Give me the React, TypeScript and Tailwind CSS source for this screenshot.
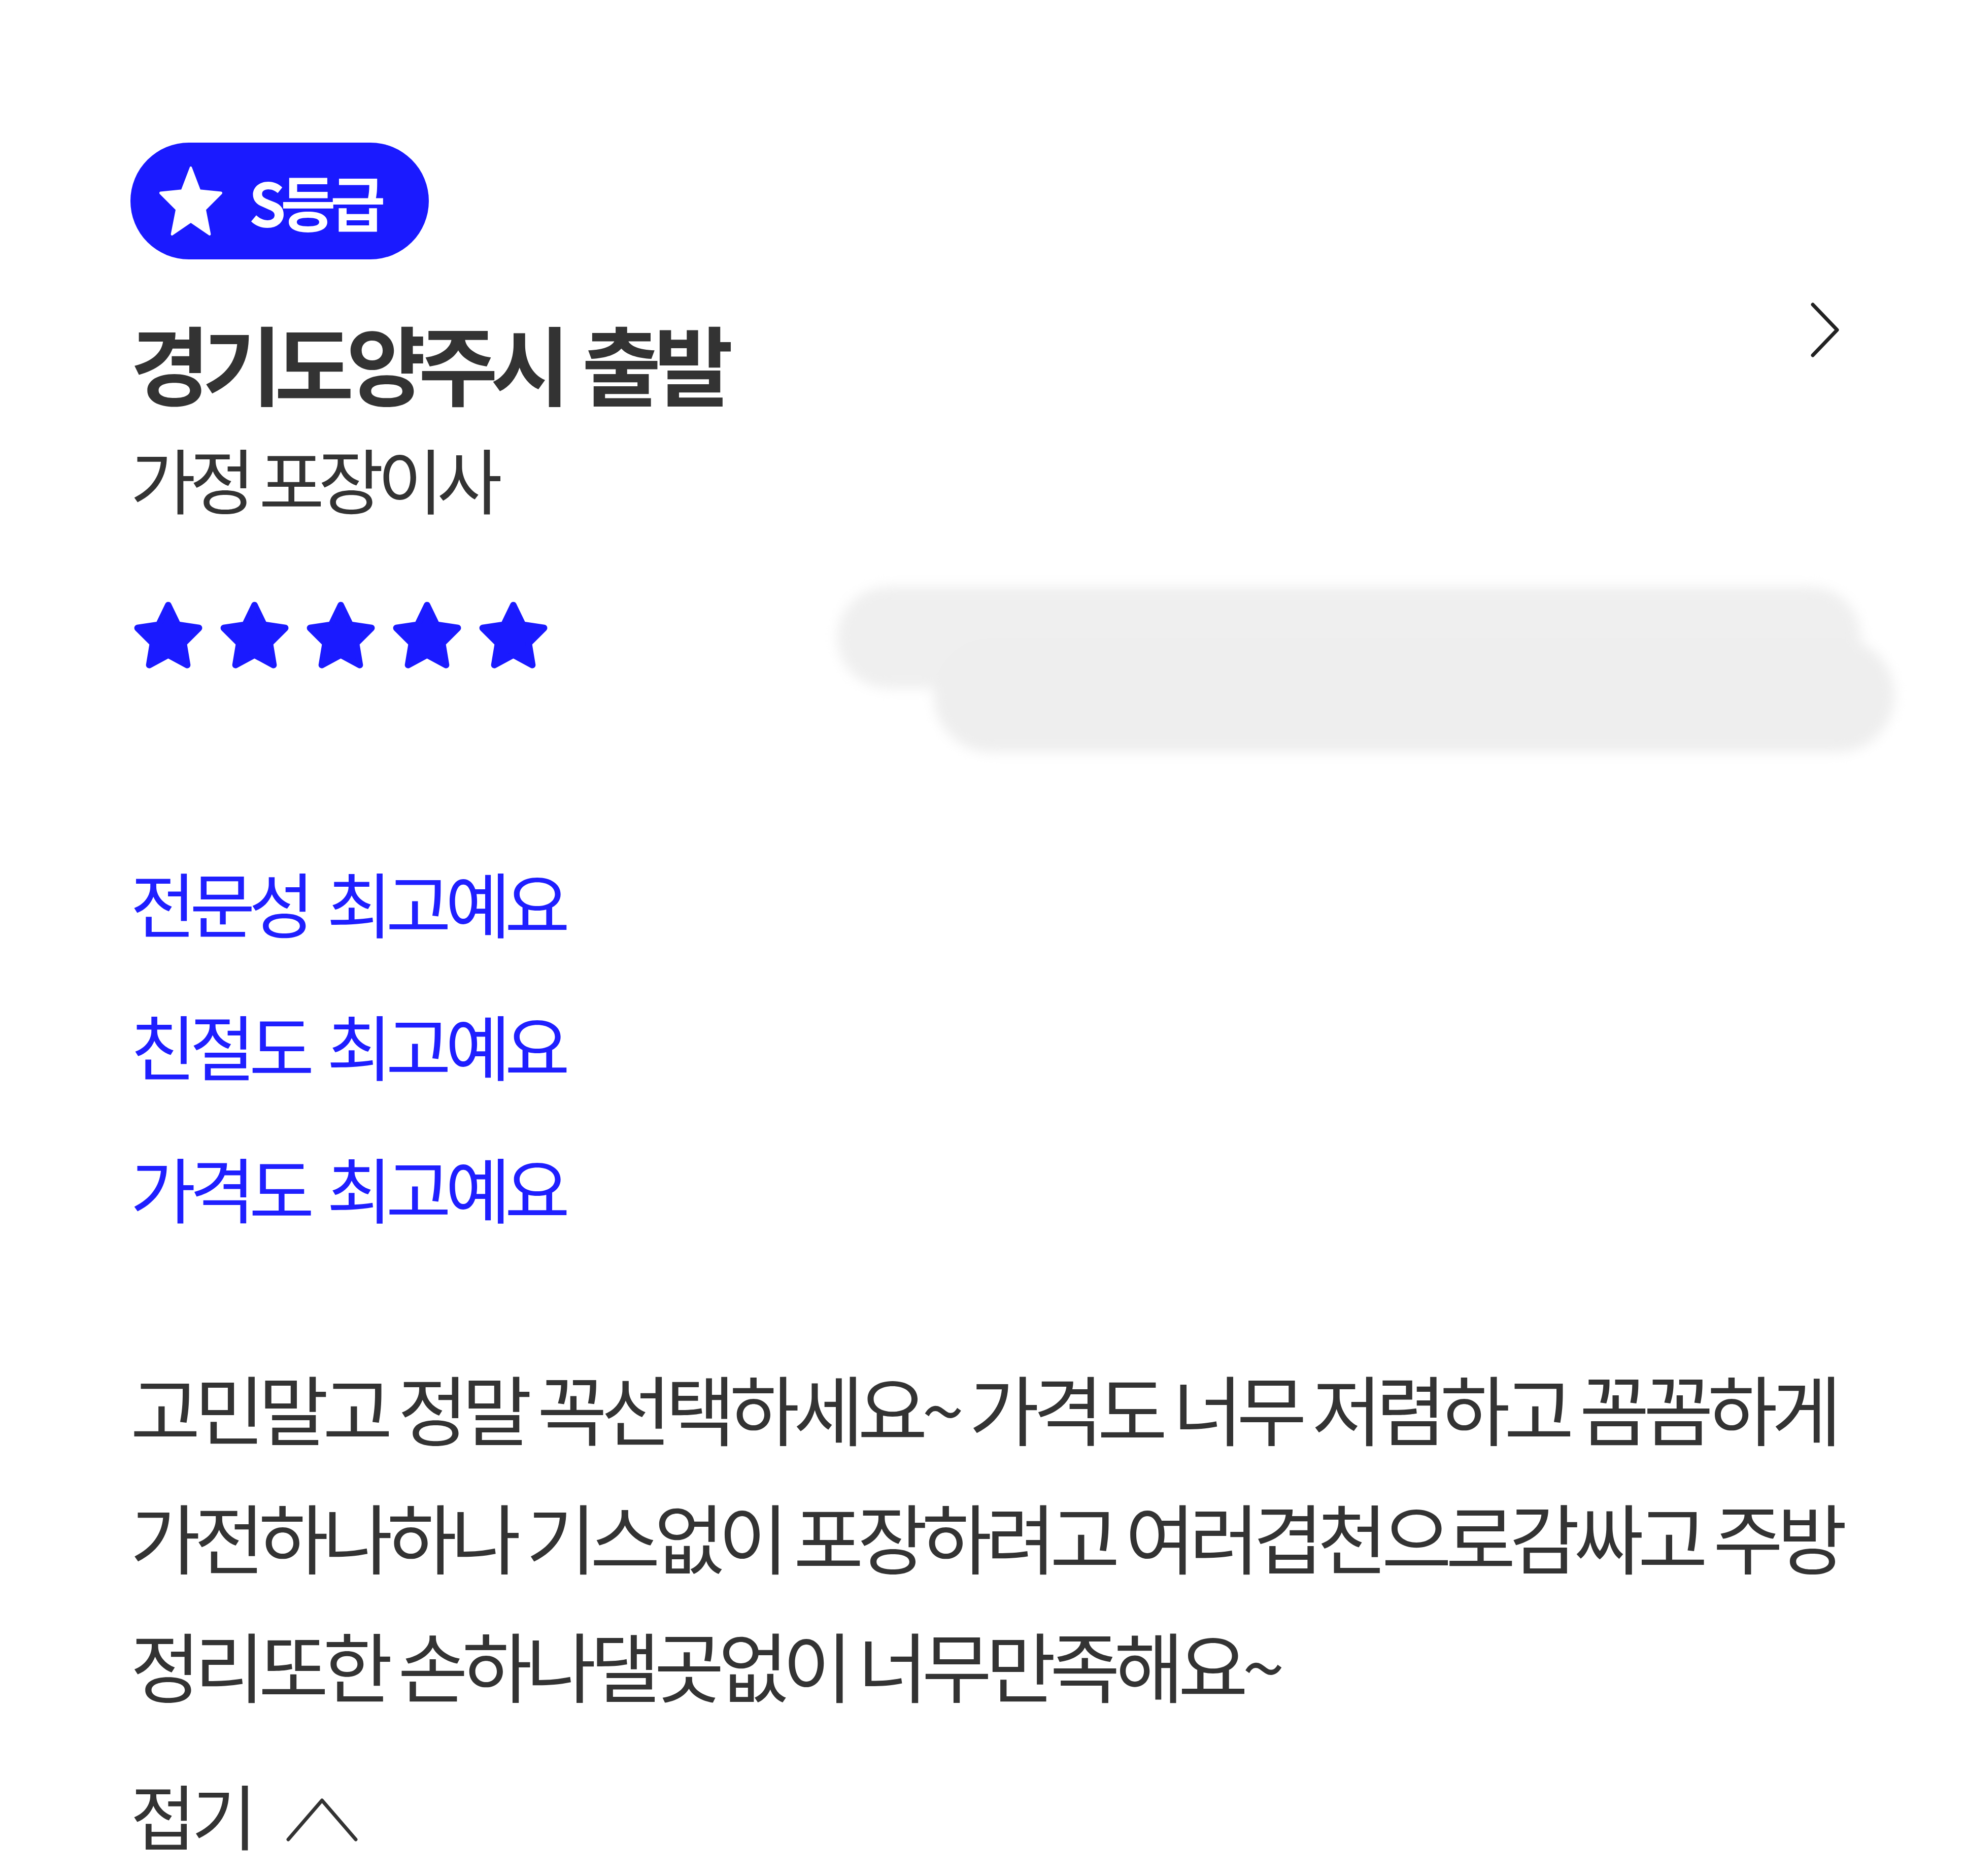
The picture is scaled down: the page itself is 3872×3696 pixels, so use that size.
import React from "react";

const RoundStar = ({ className = "" }: { className?: string }) => (
  <svg viewBox="1.4 1.4 21.2 20.4" preserveAspectRatio="none" className={className}>
    <path
      d="M12 2.5L14.94 8.45 21.51 9.41 16.76 14.05 17.88 20.59 12 17.5 6.12 20.59 7.24 14.05 2.49 9.41 9.06 8.45Z"
      fill="currentColor"
      stroke="currentColor"
      strokeWidth="2"
      strokeLinejoin="round"
    />
  </svg>
);

const Stars = () => (
  <div className="flex gap-[35px] mt-[29px] ml-[7px] text-[#1a1aff]">
    {[0, 1, 2, 3, 4].map((i) => (
      <RoundStar key={i} className="w-[135px] h-[133px]" />
    ))}
  </div>
);

const Tag = ({ label }: { label: string }) => (
  <p className="leading-[281px] text-[140px] tracking-[-0.085em] text-[#1f1fff] whitespace-nowrap">
    <span>{label}</span>
    <span className="ml-[36px]">최고예요</span>
  </p>
);

export default function App() {
  return (
    <div className="w-[3872px] h-[3696px] bg-white pl-[257px] pr-[139px] pt-[281px] font-['Noto_Sans_CJK_KR','Noto_Sans',sans-serif] text-[#333333]">
      <div className="flex justify-between">
        <div>
          <div className="flex items-center w-[588px] h-[230px] rounded-full bg-[#1a1aff] pl-[57px] gap-[52px]">
            <svg
              viewBox="1.6 1.6 20.8 19.8"
              preserveAspectRatio="none"
              className="w-[124px] h-[136px] text-white"
            >
              <path
                d="M12 2l2.9 6.6 7.1.6-5.4 4.7 1.6 7.1L12 17.3 5.8 21l1.6-7.1L2 9.2l7.1-.6z"
                fill="currentColor"
                stroke="currentColor"
                strokeWidth="0.8"
                strokeLinejoin="round"
              />
            </svg>
            <span className="text-[118px] font-bold text-white tracking-[-0.09em] leading-none">
              S등급
            </span>
          </div>
          <h1 className="mt-[102px] leading-[200px] text-[170px] font-bold tracking-[-0.085em] [word-spacing:0.08em] whitespace-nowrap">
            경기도양주시 출발
          </h1>
          <p className="mt-[48px] leading-[160px] text-[140px] tracking-[-0.085em] whitespace-nowrap">
            가정 포장이사
          </p>
        </div>
        <svg
          viewBox="0 0 60 110"
          className="w-[60px] h-[110px] mt-[314px] mr-[106px] text-[#222222]"
          fill="none"
        >
          <path
            d="M5 5 L53 55 L5 105"
            stroke="currentColor"
            strokeWidth="7"
            strokeLinecap="round"
            strokeLinejoin="round"
          />
        </svg>
      </div>

      <div className="flex items-start justify-between mt-[135px]">
        <Stars />
        <div className="flex flex-col blur-[12px]">
          <div className="w-[2017px] h-[200px] rounded-full bg-[#efefef]" />
          <div className="w-[1893px] h-[225px] rounded-full bg-[#eeeeee] ml-[190px] mt-[-99px]" />
        </div>
      </div>

      <div className="mt-[154px]">
        <Tag label="전문성" />
        <Tag label="친절도" />
        <Tag label="가격도" />
      </div>

      <div className="mt-[166px] text-[150px] leading-[253px] tracking-[-0.078em] whitespace-nowrap">
        <p>고민말고 정말 꼭선택하세요~ 가격도 너무 저렴하고 꼼꼼하게</p>
        <p>가전하나하나 기스없이 포장하려고 여러겹천으로감싸고 주방</p>
        <p>정리또한 손하나댈곳없이 너무만족해요~</p>
      </div>

      <div className="mt-[69px] flex items-center gap-[66px] leading-[200px]">
        <span className="text-[140px] tracking-[-0.06em]">접기</span>
        <svg viewBox="0 0 141 86" className="w-[141px] h-[86px] mt-[24px] text-[#333333]" fill="none">
          <path
            d="M4 82 L70.5 5 L137 82"
            stroke="currentColor"
            strokeWidth="7"
            strokeLinecap="round"
            strokeLinejoin="round"
          />
        </svg>
      </div>
    </div>
  );
}
